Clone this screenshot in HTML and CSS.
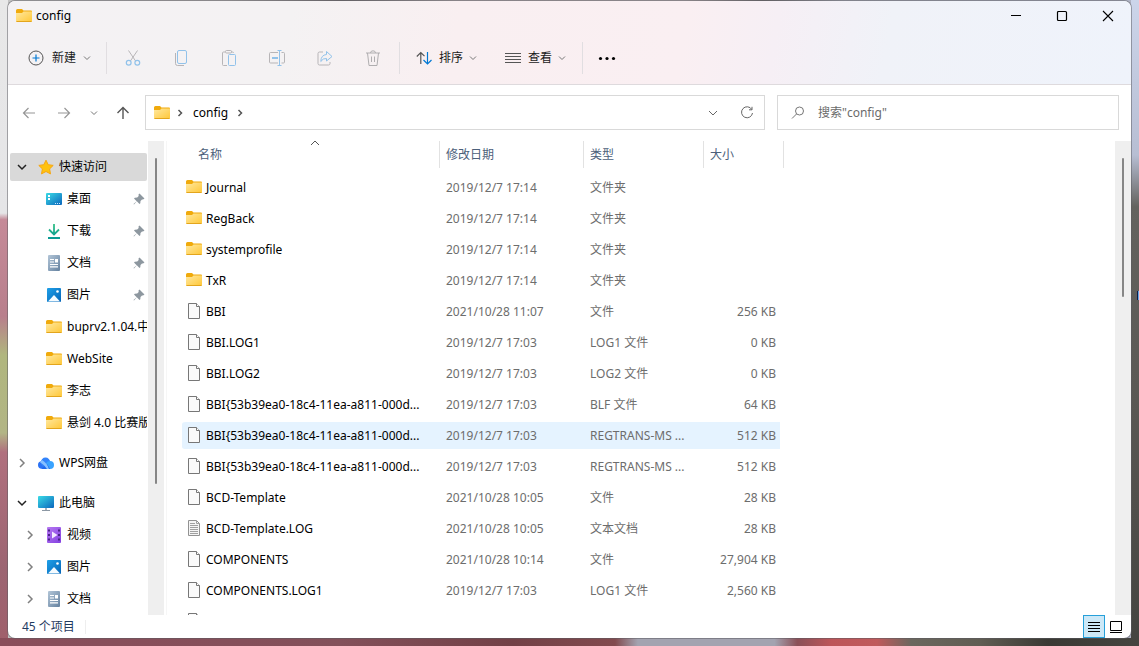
FILE: index.html
```
<!DOCTYPE html>
<html lang="zh-CN">
<head>
<meta charset="utf-8">
<title>config</title>
<link rel="stylesheet" href="styles.css">
</head>
<body>
<svg class="defs" aria-hidden="true">
  <defs>
    <linearGradient id="gFolder" x1="0" y1="0" x2="1" y2="1"><stop offset="0" stop-color="#ffe8a0"/><stop offset="1" stop-color="#ffc736"/></linearGradient>
    <linearGradient id="gCyan" x1="0" y1="0" x2="1" y2="1"><stop offset="0" stop-color="#3adbe6"/><stop offset="1" stop-color="#0b66bd"/></linearGradient>
    <linearGradient id="gBlue" x1="0" y1="0" x2="1" y2="1"><stop offset="0" stop-color="#1fa0e8"/><stop offset="1" stop-color="#0565b8"/></linearGradient>
    <linearGradient id="gDoc" x1="0" y1="0" x2="1" y2="1"><stop offset="0" stop-color="#b3c6d8"/><stop offset="1" stop-color="#64819f"/></linearGradient>
    <linearGradient id="gVideo" x1="0" y1="0" x2="1" y2="1"><stop offset="0" stop-color="#b678f2"/><stop offset="1" stop-color="#8340e0"/></linearGradient>
    <linearGradient id="gDown" x1="0" y1="0" x2="0" y2="1"><stop offset="0" stop-color="#35c186"/><stop offset="1" stop-color="#0a9b94"/></linearGradient>
    <symbol id="folder" viewBox="0 0 16 16"><path d="M0 2.500Q0 1 1.500 1H6L7.500 2.500H15Q16 2.500 16 3.500V8H0Z" fill="#f0aa0c"/><path d="M0 5H6L7.500 3.500H16V12.500Q16 14 14.500 14H1.500Q0 14 0 12.500Z" fill="url(#gFolder)"/><path d="M.4 13.500H15.600" stroke="#e3a51c"/></symbol>
    <symbol id="file" viewBox="0 0 16 16"><path d="M2.500.5H10.500L13.500 3.500V15.500H2.500Z" fill="#fafafa" stroke="#777"/><path d="M10.500.5V3.500H13.500" fill="#fff" stroke="#777"/></symbol>
    <symbol id="text" viewBox="0 0 16 16"><path d="M2.500.5H10.500L13.500 3.500V15.500H2.500Z" fill="#f5f5f5" stroke="#929292"/><path d="M10.500.5V3.500H13.500M4 3.500H9M4 5.500H12M4 7.500H12M4 9.500H12M4 11.500H12M4 13.500H12" fill="none" stroke="#a0a0a0"/></symbol>
    <symbol id="down" viewBox="0 0 10 10"><path d="M2 3.500L5 6.500 8 3.500" fill="none" stroke="currentColor"/></symbol>
    <symbol id="caret" viewBox="0 0 10 10"><path d="M1 3L5 7 9 3" fill="none" stroke="currentColor" stroke-width="1.500"/></symbol>
    <symbol id="next" viewBox="0 0 10 10"><path d="M3 1L7 5 3 9" fill="none" stroke="currentColor" stroke-width="1.500"/></symbol>
    <symbol id="crumb" viewBox="0 0 10 10"><path d="M3.500 2L6.500 5 3.500 8" fill="none" stroke="currentColor" stroke-width="1.500"/></symbol>
    <symbol id="pin" viewBox="0 0 12 12"><path d="M6.500.5L11.500 5.500 10 6.500 9 6.400 7.500 8 7.300 10.300 6.500 11 3.800 8.300 1 11.500.5 11 3.700 8.200 1 5.500 1.800 4.700 4.200 4.500 5.700 3 5.500 1.500Z" fill="#8d979f"/></symbol>
    <symbol id="star" viewBox="0 0 16 16"><path d="M8 1.200L10.200 5.700 15.200 6.400 11.600 9.900 12.500 14.900 8 12.500 3.500 14.900 4.400 9.900.8 6.400 5.800 5.700Z" fill="#ffc20f" stroke="#f5a613" stroke-linejoin="round"/></symbol>
    <symbol id="desktop" viewBox="0 0 16 16"><rect y="2" width="16" height="12" rx="1" fill="url(#gCyan)"/><path d="M2 4h2v2H2zM2 7h2v2H2z" fill="#fff"/><path d="M9 12.500h1M11 12.500h1M13 12.500h1" stroke="#cbe8ff"/></symbol>
    <symbol id="download" viewBox="0 0 16 16"><path d="M8 1V11M3 6.500L8 11.500 13 6.500M2 15H14" fill="none" stroke="url(#gDown)" stroke-width="1.800"/></symbol>
    <symbol id="doc" viewBox="0 0 16 16"><rect x="2" width="12" height="16" rx="1" fill="url(#gDoc)"/><path d="M4 4.500H8M4 7H8M4 9.500H12M4 11.800H12" stroke="#fff" stroke-width="1.200"/><path d="M9 4h3v3.500H9z" fill="#fff"/></symbol>
    <symbol id="picture" viewBox="0 0 16 16"><rect x="1" y="1" width="14" height="14" rx="1" fill="url(#gBlue)"/><path d="M2 14.500L8 8 14 14.500Z" fill="#f5fbff"/><circle cx="11.500" cy="4.500" r="1.300" fill="#fff"/></symbol>
    <symbol id="cloud" viewBox="0 0 16 16"><circle cx="3.700" cy="10" r="3.700" fill="#2b72f5"/><circle cx="7.500" cy="7.200" r="4.700" fill="#3384fb"/><circle cx="12" cy="10" r="4" fill="#39a3ff"/><path d="M3.500 13.700L9 9 12 14H3.500Z" fill="#1d68ec"/><path d="M9 14Q7 10 2 7.200L4 5Q9 8 11 14Z" fill="#87c0ff"/></symbol>
    <symbol id="pc" viewBox="0 0 16 16"><rect y="1" width="16" height="12" rx="1" fill="url(#gCyan)"/><path d="M7 13h2v2H7z" fill="#a8b1ba"/><path d="M4 15.500H12" stroke="#8c98a4"/></symbol>
    <symbol id="video" viewBox="0 0 16 16"><rect x="1" width="14" height="16" rx="1" fill="url(#gVideo)"/><path d="M3 2.500V14M13 2.500V14" stroke="#4a2486" stroke-width="2" stroke-dasharray="2 2.500"/><path d="M6 4.500V11.500L11.500 8Z" fill="#f4eaff"/></symbol>
  </defs>
</svg>
<div class="desktop">
  <span class="desk-item"></span>
  <div class="window">
    <header class="head">
      <div class="title">
        <svg class="i16"><use href="#folder"/></svg>
        <h1 class="title-text">config</h1>
        <div class="win-controls">
          <button class="win-btn" aria-label="最小化"><svg class="i12"><path d="M1 5.500H11" stroke="#000"/></svg></button>
          <button class="win-btn" aria-label="最大化"><svg class="i12"><rect x="1.500" y="1.500" width="9" height="9" rx="1" fill="none" stroke="#000" stroke-width="1.200"/></svg></button>
          <button class="win-btn" aria-label="关闭"><svg class="i12"><path d="M1 1L11 11M11 1L1 11" stroke="#000" stroke-width="1.100"/></svg></button>
        </div>
      </div>
      <div class="toolbar">
        <button class="tool first"><svg class="i16" fill="none"><circle cx="8" cy="8" r="7" stroke="#555"/><path d="M8 4.500V11.500M4.500 8H11.500" stroke="#0078d4" stroke-width="1.200"/></svg><span>新建</span><svg class="i10"><use href="#down"/></svg></button>
        <i class="sep"></i>
        <div class="group">
          <button class="icon-btn" aria-label="剪切" disabled><svg class="i16" fill="none" stroke="#b7b5b7"><path d="M3.500.5L10.600 11M12.500.5L5.400 11"/><g stroke="#91c2ea" stroke-width="1.200"><circle cx="3.700" cy="12.800" r="2.400"/><circle cx="12.300" cy="12.800" r="2.400"/></g></svg></button>
          <button class="icon-btn" aria-label="复制" disabled><svg class="i16" fill="none" stroke="#b7b5b7"><path d="M2.500 3V13.500Q2.500 15.500 4.500 15.500H11"/><rect x="4.500" y=".5" width="9" height="13" rx="1.500" stroke="#91c2ea"/></svg></button>
          <button class="icon-btn" aria-label="粘贴" disabled><svg class="i16" fill="none" stroke="#b7b5b7"><path d="M6 15.500H2.500Q1.500 15.500 1.500 14.500V3Q1.500 2 2.500 2H4M10 2H11.500Q12.500 2 12.500 3"/><rect x="4.500" y=".5" width="6" height="2.500" rx="1"/><rect x="7.500" y="4.500" width="7" height="11" rx="1" stroke="#91c2ea"/></svg></button>
          <button class="icon-btn" aria-label="重命名" disabled><svg class="i16" fill="none" stroke="#b7b5b7"><path d="M9 2.500H1.500Q.5 2.500 .5 3.500V12Q.5 13 1.500 13H9M12.500 2.500H14.500Q15.500 2.500 15.500 3.500V12Q15.500 13 14.500 13H12.500"/><path d="M10.500.5V15.500M8.500.5H12.500M8.500 15.500H12.500" stroke="#91c2ea"/><path d="M3 8H9" stroke="#91c2ea" stroke-width="2"/></svg></button>
          <button class="icon-btn" aria-label="共享" disabled><svg class="i16" fill="none" stroke="#b7b5b7"><path d="M6 2H2.500Q1 2 1 3.500V13.500Q1 15 2.500 15H11.500Q13 15 13 13.500V12"/><path d="M9.500 1.500L15 6.500 9.500 11V8.500Q6 8 3.800 11.500 4 5 9.500 4.500Z" stroke="#91c2ea" stroke-linejoin="round"/></svg></button>
          <button class="icon-btn" aria-label="删除" disabled><svg class="i16" fill="none" stroke="#b0aeb0"><path d="M1 3H15M2.500 3L4 15.500H12L13.500 3M5.500 3Q5.500 .8 8 .8T10.500 3M6.500 6.500V12M9.500 6.500V12"/></svg></button>
        </div>
        <i class="sep"></i>
        <button class="tool"><svg class="i16" fill="none" stroke-width="1.200"><path d="M4.800 14V2.500M.8 6.500L4.800 2.500 8.500 6.200" stroke="#555"/><path d="M11.500 2V14M7.500 10L11.500 14 15.500 10" stroke="#0078d4"/></svg><span>排序</span><svg class="i10"><use href="#down"/></svg></button>
        <button class="tool view"><svg class="i16"><path d="M0 3.500H16M0 6.500H16M0 9.500H16M0 12.500H16" stroke="#555"/></svg><span>查看</span><svg class="i10"><use href="#down"/></svg></button>
        <i class="sep"></i>
        <button class="more" aria-label="更多"><svg class="i18"><circle cx="2.500" cy="9.500" r="1.600"/><circle cx="9" cy="9.500" r="1.600"/><circle cx="15.500" cy="9.500" r="1.600"/></svg></button>
      </div>
    </header>
    <nav class="navbar" aria-label="导航">
      <button class="nav-btn" aria-label="后退"><svg class="i16"><path d="M14 8H2.500M7.500 3L2.500 8 7.500 13" fill="none" stroke="#969696" stroke-width="1.200"/></svg></button>
      <button class="nav-btn" aria-label="前进"><svg class="i16"><path d="M2 8H13.500M8.500 3L13.500 8 8.500 13" fill="none" stroke="#969696" stroke-width="1.200"/></svg></button>
      <button class="nav-btn recent" aria-label="最近浏览的位置"><svg class="i10"><use href="#down"/></svg></button>
      <button class="nav-btn up" aria-label="向上"><svg class="i16"><path d="M8 14V2.500M2.500 8L8 2.500 13.500 8" fill="none" stroke="#555" stroke-width="1.400"/></svg></button>
      <div class="address">
        <svg class="i16"><use href="#folder"/></svg>
        <svg class="i10 dark"><use href="#crumb"/></svg>
        <a class="crumb" href="#config">config</a>
        <svg class="i10 dark"><use href="#crumb"/></svg>
        <button class="addr-btn push" aria-label="以前的位置"><svg class="i10"><path d="M1 3L5 7 9 3" fill="none" stroke="#666"/></svg></button>
        <button class="addr-btn" aria-label="刷新"><svg class="i16" fill="none" stroke="#666"><path d="M12.800 4.500A5.500 5.500 0 1 0 13.500 8M13 1.800V4.800H10"/></svg></button>
      </div>
      <label class="search">
        <svg class="i16" fill="none" stroke="#777"><circle cx="9.500" cy="6" r="4"/><path d="M6.500 9L2 13.500"/></svg>
        <input class="search-input" type="search" aria-label="搜索" placeholder="搜索&quot;config&quot;">
      </label>
    </nav>
    <div class="content">
      <aside class="side">
        <ul class="tree">
          <li class="node top active"><svg class="i10 twist open"><use href="#caret"/></svg><svg class="i16"><use href="#star"/></svg><span>快速访问</span></li>
          <li class="node"><svg class="i16"><use href="#desktop"/></svg><span>桌面</span><svg class="i12 pin"><use href="#pin"/></svg></li>
          <li class="node"><svg class="i16"><use href="#download"/></svg><span>下载</span><svg class="i12 pin"><use href="#pin"/></svg></li>
          <li class="node"><svg class="i16"><use href="#doc"/></svg><span>文档</span><svg class="i12 pin"><use href="#pin"/></svg></li>
          <li class="node"><svg class="i16"><use href="#picture"/></svg><span>图片</span><svg class="i12 pin"><use href="#pin"/></svg></li>
          <li class="node"><svg class="i16"><use href="#folder"/></svg><span>buprv2.1.04.中</span></li>
          <li class="node"><svg class="i16"><use href="#folder"/></svg><span>WebSite</span></li>
          <li class="node"><svg class="i16"><use href="#folder"/></svg><span>李志</span></li>
          <li class="node"><svg class="i16"><use href="#folder"/></svg><span>悬剑 4.0 比赛版</span></li>
          <li class="node top spaced"><svg class="i10 twist"><use href="#next"/></svg><svg class="i16"><use href="#cloud"/></svg><span>WPS网盘</span></li>
          <li class="node top spaced"><svg class="i10 twist open"><use href="#caret"/></svg><svg class="i16"><use href="#pc"/></svg><span>此电脑</span></li>
          <li class="node sub"><svg class="i10 twist"><use href="#next"/></svg><svg class="i16"><use href="#video"/></svg><span>视频</span></li>
          <li class="node sub"><svg class="i10 twist"><use href="#next"/></svg><svg class="i16"><use href="#picture"/></svg><span>图片</span></li>
          <li class="node sub"><svg class="i10 twist"><use href="#next"/></svg><svg class="i16"><use href="#doc"/></svg><span>文档</span></li>
        </ul>
      </aside>
      <div class="track"><div class="thumb side-thumb"></div></div>
      <main class="list">
        <table class="files">
          <colgroup><col class="c-name"><col class="c-date"><col class="c-type"><col class="c-size"></colgroup>
          <thead><tr><th class="h-name" scope="col"><div class="th">名称</div><svg class="i10 sort"><path d="M1 7L5 3 9 7" fill="none" stroke="#555"/></svg></th><th scope="col"><div class="th">修改日期</div></th><th scope="col"><div class="th">类型</div></th><th scope="col"><div class="th">大小</div></th></tr></thead>
          <tbody>
            <tr><td><div class="name"><svg class="i16"><use href="#folder"/></svg><span>Journal</span></div></td><td>2019/12/7 17:14</td><td>文件夹</td><td></td></tr>
            <tr><td><div class="name"><svg class="i16"><use href="#folder"/></svg><span>RegBack</span></div></td><td>2019/12/7 17:14</td><td>文件夹</td><td></td></tr>
            <tr><td><div class="name"><svg class="i16"><use href="#folder"/></svg><span>systemprofile</span></div></td><td>2019/12/7 17:14</td><td>文件夹</td><td></td></tr>
            <tr><td><div class="name"><svg class="i16"><use href="#folder"/></svg><span>TxR</span></div></td><td>2019/12/7 17:14</td><td>文件夹</td><td></td></tr>
            <tr><td><div class="name"><svg class="i16"><use href="#file"/></svg><span>BBI</span></div></td><td>2021/10/28 11:07</td><td>文件</td><td>256 KB</td></tr>
            <tr><td><div class="name"><svg class="i16"><use href="#file"/></svg><span>BBI.LOG1</span></div></td><td>2019/12/7 17:03</td><td>LOG1 文件</td><td>0 KB</td></tr>
            <tr><td><div class="name"><svg class="i16"><use href="#file"/></svg><span>BBI.LOG2</span></div></td><td>2019/12/7 17:03</td><td>LOG2 文件</td><td>0 KB</td></tr>
            <tr><td><div class="name"><svg class="i16"><use href="#file"/></svg><span>BBI{53b39ea0-18c4-11ea-a811-000d...</span></div></td><td>2019/12/7 17:03</td><td>BLF 文件</td><td>64 KB</td></tr>
            <tr class="hover"><td><div class="name"><svg class="i16"><use href="#file"/></svg><span>BBI{53b39ea0-18c4-11ea-a811-000d...</span></div></td><td>2019/12/7 17:03</td><td>REGTRANS-MS ...</td><td>512 KB</td></tr>
            <tr><td><div class="name"><svg class="i16"><use href="#file"/></svg><span>BBI{53b39ea0-18c4-11ea-a811-000d...</span></div></td><td>2019/12/7 17:03</td><td>REGTRANS-MS ...</td><td>512 KB</td></tr>
            <tr><td><div class="name"><svg class="i16"><use href="#file"/></svg><span>BCD-Template</span></div></td><td>2021/10/28 10:05</td><td>文件</td><td>28 KB</td></tr>
            <tr><td><div class="name"><svg class="i16"><use href="#text"/></svg><span>BCD-Template.LOG</span></div></td><td>2021/10/28 10:05</td><td>文本文档</td><td>28 KB</td></tr>
            <tr><td><div class="name"><svg class="i16"><use href="#file"/></svg><span>COMPONENTS</span></div></td><td>2021/10/28 10:14</td><td>文件</td><td>27,904 KB</td></tr>
            <tr><td><div class="name"><svg class="i16"><use href="#file"/></svg><span>COMPONENTS.LOG1</span></div></td><td>2019/12/7 17:03</td><td>LOG1 文件</td><td>2,560 KB</td></tr>
            <tr><td><div class="name"><svg class="i16"><use href="#file"/></svg></div></td><td></td><td></td><td></td></tr>
          </tbody>
        </table>
      </main>
      <div class="track"><div class="thumb list-thumb"></div></div>
    </div>
    <footer class="status">
      <span class="count">45 个项目</span>
      <button class="view-btn selected" aria-label="详细信息"><svg class="i16"><path d="M2 3.500H14M2 6.500H14M2 9.500H14M2 12.500H14" stroke="#000"/></svg></button>
      <button class="view-btn" aria-label="大图标"><svg class="i16"><path d="M2.500 2.500H13.500V11.500H2.500ZM2 13.500H14" fill="none" stroke="#000"/></svg></button>
    </footer>
  </div>
</div>
</body>
</html>
```

FILE: styles.css
```
* { box-sizing: border-box; }

body {
  margin: 0;
  font: 12px/16px "Noto Sans", "Noto Sans CJK SC", sans-serif;
  color: #000;
}

button {
  display: flex;
  align-items: center;
  justify-content: center;
  margin: 0;
  padding: 0;
  border: 0;
  background: none;
  font: inherit;
  color: inherit;
}

svg { display: block; flex: none; }
.defs { position: absolute; width: 0; height: 0; }
.i10 { width: 10px; height: 10px; }
.i12 { width: 12px; height: 12px; }
.i16 { width: 16px; height: 16px; }
.i18 { width: 18px; height: 18px; }

.desktop {
  position: relative;
  height: 100vh;
  padding: 0 7px 7px;
  background:
    linear-gradient(90deg, #8a4d5a, #83505a 30%, #724046 45%, #824a4e 54%, #a3a3b0 56%, #a3a3b0 68%, #8b5058 70%, #bd5559 73%, #c05a5c 77%, #6b675e 80%, #605d53 86%, #3a3934 92%, #454540) bottom / 100% 8px no-repeat,
    linear-gradient(#e8e8e8, #e5e5e7 33%, #c58a98 34%, #b87f8c 49%, #b0b67e 55%, #b2b585 67%, #b0707e 70%, #9c6572 88%, #a05f6b) left / 8px 100% no-repeat,
    linear-gradient(#ccd5ea, #b7bed3 24%, #64635f 32%, #5b5955 60%, #444440) right / 8px 100% no-repeat,
    linear-gradient(90deg, #c4c4c4, #b8b5b4 20%, #706a6c 30%, #b7adb0 40%, #b9afb2 60%, #6b6668 67%, #a9abb8 74%, #b0b4c5);
}

.desk-item {
  position: absolute;
  right: 0;
  top: 291px;
  width: 2px;
  height: 9px;
  background: #62a6e8;
  border-left: 1px solid #101a45;
}

.window {
  display: flex;
  flex-direction: column;
  height: 100%;
  border: 1px solid rgba(90, 90, 95, .5);
  border-radius: 8px;
  overflow: hidden;
  background: #fff;
  background-clip: padding-box;
}

.head {
  border-bottom: 1px solid #dedadd;
  background: linear-gradient(100deg, #f4f2f4, #f4f2f3 25%, #f9eff1 40%, #faeff2 60%, #f6eff5 68%, #f0f2f8 78%, #eff3fb);
}

.title { display: flex; align-items: center; height: 30px; padding-left: 8px; }
.title-text { margin: 0 0 0 4px; font-size: 12px; font-weight: 400; }
.win-controls { display: flex; margin-left: auto; }
.win-btn { width: 46px; height: 28px; }

.toolbar { display: flex; align-items: center; height: 53px; padding-left: 20px; }
.tool { gap: 7px; height: 32px; color: #1a1a1a; }
.tool .i10 { color: #777; margin-left: -2px; }
.first { gap: 8px; }
.sep { width: 1px; height: 32px; margin: 0 16px; background: #e1dee1; }
.first + .sep { margin: 0 2px 0 14px; }
.group { display: flex; }
.icon-btn { width: 48px; height: 32px; }
.group + .sep { margin-left: 2px; }
.view { margin-left: 27px; }
.view + .sep { margin-right: 15px; margin-left: 15px; }

.navbar { display: flex; align-items: center; padding: 10px 12px 11px 3px; color: #555; }
.nav-btn { width: 35px; height: 34px; }
.recent { width: 26px; color: #777; }
.up { width: 32px; margin-right: 6px; }
.address, .search { display: flex; align-items: center; height: 35px; border: 1px solid #d9d9d9; }
.address { flex: 1; min-width: 0; padding-left: 8px; }
.dark { margin: 0 5px; color: #555; }
.crumb { margin: 0 2px 0 3px; color: #000; text-decoration: none; }
.addr-btn { width: 34px; height: 33px; }
.push { margin-left: auto; }
.search { width: 342px; margin-left: 12px; padding: 0 12px; gap: 12px; }
.search-input { flex: 1; min-width: 0; padding: 0; border: 0; outline: 0; background: none; font: inherit; color: #666; }
.search-input::placeholder { color: #6b6b6b; opacity: 1; }

.content { display: flex; flex: 1; min-height: 0; }
.side { width: 140px; overflow: hidden; }
.tree { margin: 12px 1px 0 2px; padding: 0; list-style: none; overflow: hidden; }
.node { display: flex; align-items: center; gap: 5px; height: 28px; margin-bottom: 4px; padding-left: 36px; white-space: nowrap; }
.top { padding-left: 7px; }
.sub { padding-left: 15px; }
.twist { color: #808080; margin-right: 6px; }
.open { color: #222; }
.spaced { margin-top: 12px; }
.active { background: #d9d9d9; border-radius: 2px; }
.pin { margin-left: auto; margin-right: 2px; }

.track { flex: none; width: 16px; padding-top: 17px; background: #efefef; }
.thumb { width: 2px; margin-left: 7px; background: #868686; border-radius: 1px; }
.side-thumb { height: 326px; }
.list-thumb { height: 139px; }

.list { flex: 1; min-width: 0; overflow: hidden; margin-left: 2px; padding-left: 15px; border-left: 1px solid #f6f6f6; }
.files { width: 602px; table-layout: fixed; border-collapse: separate; border-spacing: 0; color: #6d6d6d; }
.c-name { width: 258px; }
.c-date { width: 144px; }
.c-type { width: 120px; }
.c-size { width: 80px; }
th { position: relative; height: 31px; padding: 0; font-weight: 400; text-align: left; vertical-align: top; color: #4c607a; }
.th { height: 27px; padding-left: 6px; border-right: 1px solid #e2e2e2; line-height: 27px; }
.h-name .th { padding-left: 16px; }
.sort { position: absolute; left: 128px; top: -3px; }
td { height: 31px; padding: 0 0 0 6px; border: solid transparent; border-width: 2px 0; background-clip: padding-box; white-space: nowrap; }
td:first-child { padding-left: 4px; border-radius: 4px 0 0 4px; }
td:last-child { padding-right: 4px; border-right-width: 4px; text-align: right; }
.name { display: flex; align-items: center; gap: 4px; color: #000; }
.name svg { margin-bottom: 2px; }
.hover td { background-color: #e5f3ff; }

.status { display: flex; align-items: center; flex: none; height: 23px; padding: 0 4px 0 14px; }
.count { margin-right: auto; padding-right: 10px; border-right: 1px solid #eee; line-height: 14px; color: #1f3a5f; }
.view-btn { width: 22px; height: 23px; }
.selected { border: 1px solid #26a0da; background: #cce8f7; }
```
